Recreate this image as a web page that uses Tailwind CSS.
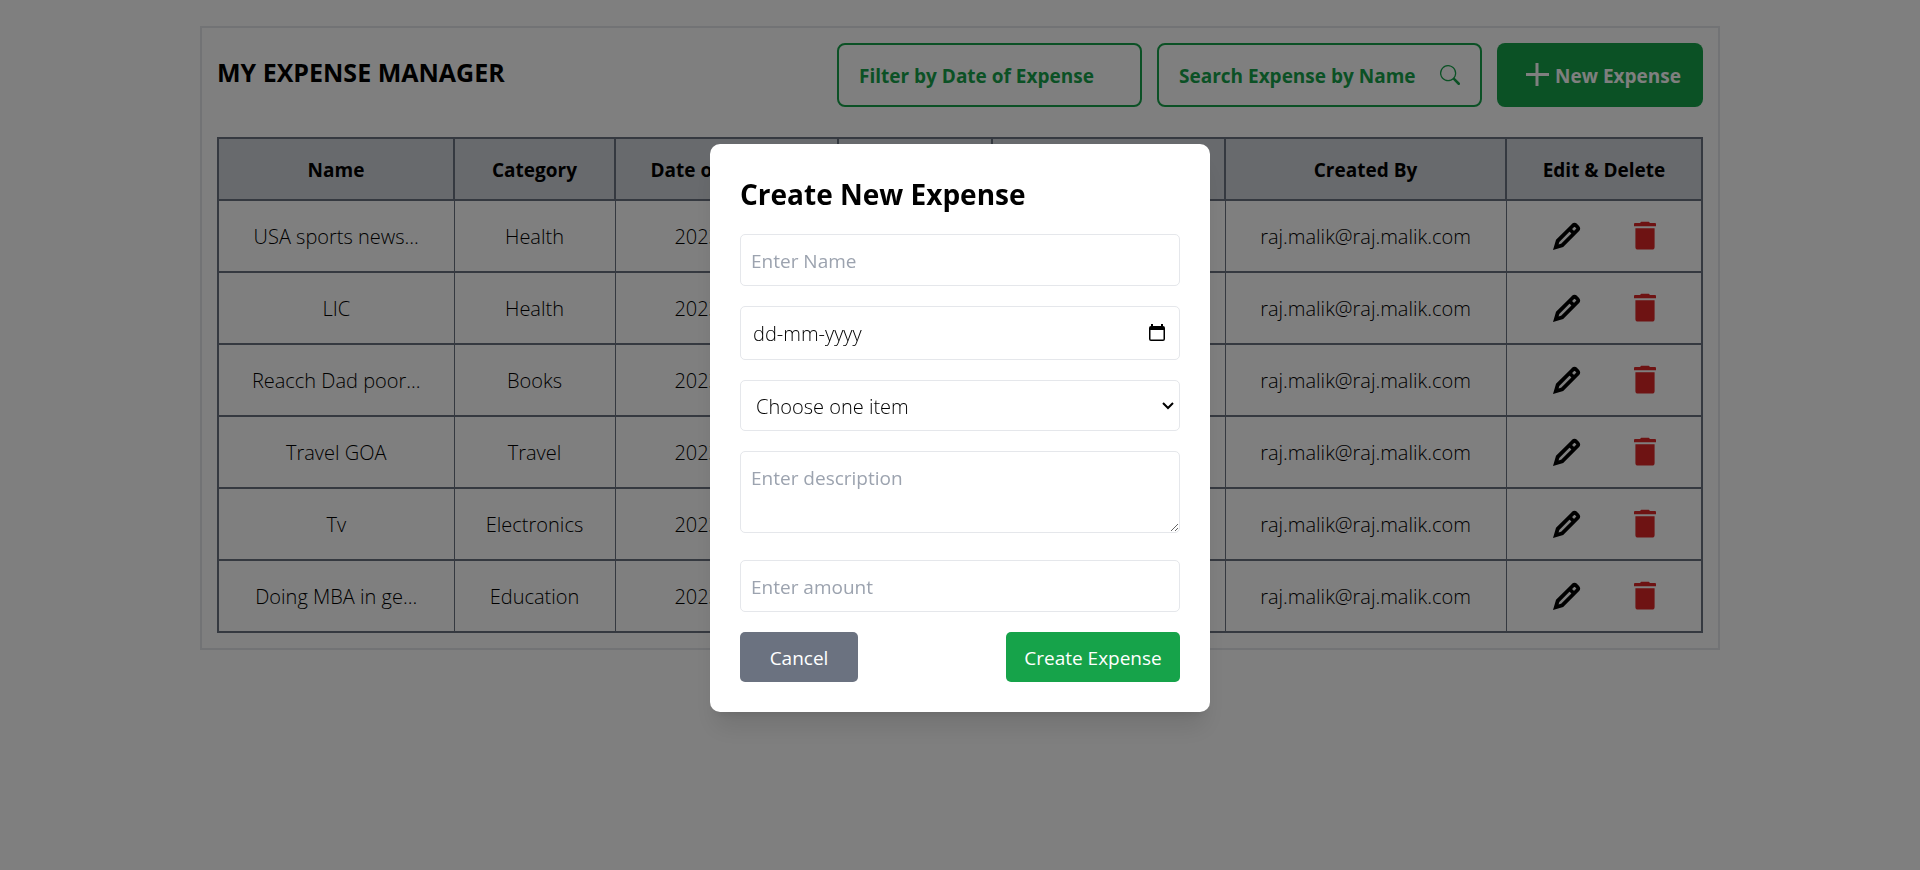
<!DOCTYPE html>
<html lang="en">
<head>
<meta charset="utf-8">
<title>My Expense Manager</title>
<script src="https://cdn.jsdelivr.net/npm/@tailwindcss/browser@4"></script>
</head>
<body class="min-h-screen bg-white font-['Open_Sans','Noto_Sans',sans-serif] text-[19px] leading-[30px] text-black">
<svg class="hidden">
  <symbol id="pencil" viewBox="0 0 28 28"><path d="M2.800 25.200 4.700 18.800 20 3.500q1.500-1.400 3 0l1.500 1.500q1.400 1.500 0 3L9.200 23.300ZM16.500 7l4.500 4.500" fill="none" stroke="currentColor" stroke-width="3.800"/></symbol>
  <symbol id="trash" viewBox="0 0 24 30"><path d="M1 3q0-1 1-1H7l1.200-1.300h7.600L17 2h5q1 0 1 1v2.200H1ZM2.400 7.200h19.200V26q0 2.600-2.600 2.600H5Q2.400 28.600 2.400 26Z" fill="currentColor"/></symbol>
</svg>
<div id="page">
  <main class="mx-auto mt-[26px] w-full max-w-[1520px] border-2 border-[#e5e7eb] p-[15px]">
    <header class="mb-[30px] flex items-start justify-between">
      <h1 class="py-[14px] text-[25px] leading-[30px] font-bold">MY EXPENSE MANAGER</h1>
      <div class="flex gap-[15px]">
        <label class="flex h-16 w-[305px] items-center rounded-[8px] border-2 border-[#16a34a] px-5">
          <input aria-label="Filter by Date of Expense" placeholder="Filter by Date of Expense" class="w-full pt-[2px] font-bold text-[#16a34a] placeholder:text-[#16a34a] outline-none">
        </label>
        <label class="flex h-16 w-[325px] items-center rounded-[8px] border-2 border-[#16a34a] px-5">
          <input aria-label="Search Expense by Name" placeholder="Search Expense by Name" class="min-w-0 flex-1 pt-[2px] font-bold text-[#16a34a] placeholder:text-[#16a34a] outline-none">
          <svg class="size-5 text-[#16a34a]" viewBox="0 0 16 16" fill="currentColor"><path d="M11.742 10.344a6.500 6.500 0 1 0-1.397 1.398h-.001c.03.04.062.078.098.115l3.850 3.850a1 1 0 0 0 1.415-1.414l-3.850-3.850a1.007 1.007 0 0 0-.115-.1zM12 6.500a5.500 5.500 0 1 1-11 0 5.500 5.500 0 0 1 11 0z"/></svg>
        </label>
        <button class="flex h-16 w-[206px] items-center justify-end gap-[6px] rounded-[8px] bg-[#16a34a] pr-[22px] font-bold text-white">
          <svg class="size-6" viewBox="0 0 24 24"><path d="M12 0v23M1 11.500h23" stroke="currentColor" stroke-width="3"/></svg><span class="pt-[2px]">New Expense</span>
        </button>
      </div>
    </header>
    <table class="w-full table-fixed border-collapse border-2 border-[#6b7280] text-center">
      <colgroup><col class="w-[236px]"><col class="w-[161px]"><col class="w-[223px]"><col class="w-[154px]"><col class="w-[233px]"><col class="w-[281px]"><col class="w-[196px]"></colgroup>
      <thead class="bg-[#d1d5db]">
        <tr class="[&>th]:border-2 [&>th]:border-[#6b7280] [&>th]:pt-4 [&>th]:pb-[14px] [&>th]:font-bold"><th>Name</th><th>Category</th><th>Date of Expense</th><th>Amount</th><th>Description</th><th>Created By</th><th>Edit &amp; Delete</th></tr>
      </thead>
      <tbody id="rows"></tbody>
    </table>
  </main>
</div>
<template id="row">
  <tr class="border-y-2 border-[#6b7280] text-[20px] [&>td]:border-x [&>td]:border-[#6b7280] [&>td]:pt-[21px] [&>td]:pb-[19px] [&>td]:font-light">
    <td></td><td></td><td>2023-04-05</td><td>1000</td><td>Details</td><td>raj.malik@raj.malik.com</td>
    <td><div class="flex h-[30px] items-center justify-center gap-[52px] pb-[2px] pl-[2px]"><button aria-label="Edit"><svg class="size-7"><use href="#pencil"/></svg></button><button aria-label="Delete" class="text-[#dc2626]"><svg class="h-[30px] w-6"><use href="#trash"/></svg></button></div></td>
  </tr>
</template>
<div class="fixed inset-0 flex items-start justify-center bg-black/50 pt-[144px]">
  <form class="w-[500px] rounded-[10px] bg-white p-[30px] shadow-xl" onsubmit="return false">
    <h2 class="mb-[20px] text-[28px] leading-[40px] font-bold">Create New Expense</h2>
    <div class="flex flex-col gap-5">
      <input aria-label="Name" placeholder="Enter Name" class="h-[52px] rounded-[5px] border border-[#e5e7eb] px-[10px] pt-[2px] placeholder:text-[#9ca3af]">
      <div class="flex h-[54px] items-center rounded-[5px] border border-[#e5e7eb] pr-[14px] pl-3">
        <input aria-label="Date of expense" placeholder="dd-mm-yyyy" class="min-w-0 flex-1 pt-[2px] text-[20px] font-light placeholder:text-black outline-none">
        <button type="button" aria-label="Open calendar"><svg class="h-5 w-4" viewBox="0 0 16 20"><path d="M2 1h2v2h8V1h2v2q2 0 2 2v11q0 2-2 2H2q-2 0-2-2V5q0-2 2-2ZM1.500 7v9q0 .5.5.5h12q.5 0 .5-.5V7Z" fill-rule="evenodd"/></svg></button>
      </div>
      <div class="grid h-[51px] items-center">
        <select aria-label="Category" class="col-start-1 row-start-1 h-full appearance-none rounded-[5px] border border-[#e5e7eb] bg-white px-[15px] pt-[2px] text-[20px] font-light"><option>Choose one item</option></select>
        <svg class="pointer-events-none col-start-1 row-start-1 mr-[6px] h-2 w-3 justify-self-end" viewBox="0 0 12 8"><path d="m1 1 5 5 5-5" fill="none" stroke="black" stroke-width="2"/></svg>
      </div>
      <textarea aria-label="Description" placeholder="Enter description" class="mb-[7px] h-[82px] rounded-[5px] border border-[#e5e7eb] px-[10px] py-[11px] placeholder:text-[#9ca3af]"></textarea>
      <input aria-label="Amount" placeholder="Enter amount" class="h-[52px] rounded-[5px] border border-[#e5e7eb] px-[10px] pt-[2px] placeholder:text-[#9ca3af]">
      <div class="flex justify-between text-white">
        <button type="button" class="h-[50px] w-[118px] rounded-[5px] bg-[#6b7280] pt-[2px]">Cancel</button>
        <button class="h-[50px] w-[174px] rounded-[5px] bg-[#16a34a] pt-[2px]">Create Expense</button>
      </div>
    </div>
  </form>
</div>
<script>
const data = [['USA sports news...','Health'],['LIC','Health'],['Reacch Dad poor...','Books'],['Travel GOA','Travel'],['Tv','Electronics'],['Doing MBA in ge...','Education']];
const tpl = document.getElementById('row');
for (const [name, category] of data) {
  const row = tpl.content.cloneNode(true);
  const cells = row.querySelectorAll('td');
  cells[0].textContent = name;
  cells[1].textContent = category;
  document.getElementById('rows').append(row);
}
</script>
</body>
</html>
